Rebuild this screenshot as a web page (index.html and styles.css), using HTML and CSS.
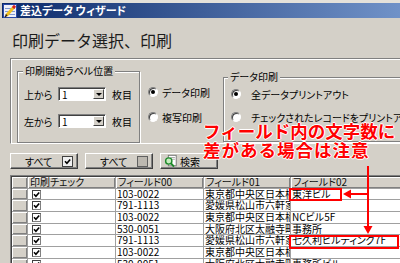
FILE: index.html
```html
<!DOCTYPE html>
<html lang="ja">
<head>
  <meta charset="UTF-8" />
  <title>差込データ ウィザード</title>
  <link rel="stylesheet" href="styles.css">
</head>
<body>
  <div class="window">
    <div class="frame-top"></div>
    <div class="titlebar">
      <svg class="app-icon" viewBox="0 0 14 14">
        <rect x="0.5" y="0.5" width="13" height="13" fill="#eef0f8" stroke="#2848a8"/>
        <path d="M2 4.5h10M2 7.5h10M2 10.5h10" stroke="#8098d0"/>
        <path d="M3.5 11.5 L10.5 3.5" stroke="#f0c020" stroke-width="3"/>
        <path d="M10 4 L12 1.8" stroke="#d82020" stroke-width="3"/>
        <path d="M2 13 L4 10.8" stroke="#302010" stroke-width="1.6"/>
      </svg>
      <span>差込データ ウィザード</span>
    </div>

    <h1 class="heading">印刷データ選択、印刷</h1>

    <div class="options">
      <fieldset class="group group-start">
        <legend>印刷開始ラベル位置</legend>
        <div class="pos-row">
          <span class="pos-label">上から</span>
          <span class="combo"><span class="combo-value">1</span><span class="combo-btn"></span></span>
          <span class="pos-unit">枚目</span>
        </div>
        <div class="pos-row">
          <span class="pos-label">左から</span>
          <span class="combo"><span class="combo-value">1</span><span class="combo-btn"></span></span>
          <span class="pos-unit">枚目</span>
        </div>
      </fieldset>

      <div class="radio-col">
        <div class="radio"><span class="radio-icon checked"></span>データ印刷</div>
        <div class="radio"><span class="radio-icon"></span>複写印刷</div>
      </div>

      <fieldset class="group group-data">
        <legend>データ印刷</legend>
        <div class="radio wide"><span class="radio-icon checked"></span>全データプリントアウト</div>
        <div class="radio wide"><span class="radio-icon"></span>チェックされたレコードをプリントアウト</div>
      </fieldset>
    </div>

    <div class="toolbar">
      <div class="btn btn-all">すべて <span class="btn-box"><svg viewBox="0 0 7 7"><path d="M1 3.2 L2.9 5.2 L6.2 1.4" fill="none" stroke="#000" stroke-width="1.6"/></svg></span></div>
      <div class="btn btn-all">すべて <span class="btn-box empty"></span></div>
      <div class="btn btn-search">
        <svg class="search-icon" viewBox="0 0 16 16">
          <rect x="5.5" y="1.5" width="9" height="12" fill="#fff" stroke="#707070"/>
          <path d="M8 4h5M8 6h5" stroke="#a0a0a0"/>
          <circle cx="6" cy="8" r="3.6" fill="#c8ecc0" stroke="#1e8a2a" stroke-width="1.6"/>
          <path d="M8.6 10.8 L12 14.5" stroke="#1e8a2a" stroke-width="2.2"/>
        </svg>
        検索
      </div>
    </div>

    <div class="grid">
      <div class="hcell"></div>
      <div class="hcell">印刷チェック</div>
      <div class="hcell">フィールド00</div>
      <div class="hcell">フィールド01</div>
      <div class="hcell">フィールド02</div>

      <div class="hcell"></div>
      <div class="cell"><span class="cb"><svg viewBox="0 0 7 7"><path d="M1 3.2 L2.9 5.2 L6.2 1.4" fill="none" stroke="#000" stroke-width="1.6"/></svg></span></div>
      <div class="cell">103-0022</div>
      <div class="cell">東京都中央区日本橋</div>
      <div class="cell">東洋ビル</div>

      <div class="hcell"></div>
      <div class="cell"><span class="cb"><svg viewBox="0 0 7 7"><path d="M1 3.2 L2.9 5.2 L6.2 1.4" fill="none" stroke="#000" stroke-width="1.6"/></svg></span></div>
      <div class="cell">791-1113</div>
      <div class="cell">愛媛県松山市六軒家町</div>
      <div class="cell"></div>

      <div class="hcell"></div>
      <div class="cell"><span class="cb"><svg viewBox="0 0 7 7"><path d="M1 3.2 L2.9 5.2 L6.2 1.4" fill="none" stroke="#000" stroke-width="1.6"/></svg></span></div>
      <div class="cell">103-0022</div>
      <div class="cell">東京都中央区日本橋</div>
      <div class="cell">NCビル5F</div>

      <div class="hcell"></div>
      <div class="cell"><span class="cb"><svg viewBox="0 0 7 7"><path d="M1 3.2 L2.9 5.2 L6.2 1.4" fill="none" stroke="#000" stroke-width="1.6"/></svg></span></div>
      <div class="cell">530-0051</div>
      <div class="cell">大阪府北区太融寺町</div>
      <div class="cell">事務所</div>

      <div class="hcell"></div>
      <div class="cell"><span class="cb"><svg viewBox="0 0 7 7"><path d="M1 3.2 L2.9 5.2 L6.2 1.4" fill="none" stroke="#000" stroke-width="1.6"/></svg></span></div>
      <div class="cell">791-1113</div>
      <div class="cell">愛媛県松山市六軒家町</div>
      <div class="cell">七久利ビルディング7F</div>

      <div class="hcell"></div>
      <div class="cell"><span class="cb"><svg viewBox="0 0 7 7"><path d="M1 3.2 L2.9 5.2 L6.2 1.4" fill="none" stroke="#000" stroke-width="1.6"/></svg></span></div>
      <div class="cell">103-0022</div>
      <div class="cell">東京都中央区日本橋</div>
      <div class="cell"></div>

      <div class="hcell"></div>
      <div class="cell"><span class="cb"><svg viewBox="0 0 7 7"><path d="M1 3.2 L2.9 5.2 L6.2 1.4" fill="none" stroke="#000" stroke-width="1.6"/></svg></span></div>
      <div class="cell">530-0051</div>
      <div class="cell">大阪府北区太融寺町</div>
      <div class="cell">事務所ビル</div>
    </div>

    <!-- annotation drawn over the dialog -->
    <div class="note">フィールド内の文字数に<br><span class="note-wide">差がある場合は注意</span></div>
    <svg class="marks" viewBox="0 0 400 263">
      <rect x="290" y="189" width="51" height="11" fill="none" stroke="#f00" stroke-width="2"/>
      <rect x="290" y="236" width="108" height="12" fill="none" stroke="#f00" stroke-width="2"/>
      <path d="M368 166 V227 M368 194 H350" fill="none" stroke="#f00" stroke-width="2"/>
      <polygon points="363.5,226 372.5,226 368,234" fill="#f00"/>
      <polygon points="351,189.5 351,198.5 343,194" fill="#f00"/>
    </svg>
  </div>
</body>
</html>
```

FILE: styles.css
```css
    body {
      margin: 0;
      font-family: "Noto Sans CJK JP", "DejaVu Sans", sans-serif;
      font-size: 10px;
      font-feature-settings: "palt";
      color: #000;
    }

    .window {
      position: relative;
      width: 400px;
      height: 263px;
      overflow: hidden;
      background-color: #d4d0c8;
    }

    .frame-top {
      height: 3px;
      background: #e4e1da;
    }

    .titlebar {
      display: flex;
      align-items: center;
      gap: 3px;
      height: 15px;
      margin-left: 2px;
      padding-left: 1px;
      background: linear-gradient(to right, #0c2a6a, #7092c8);
      color: #fff;
      font-size: 11px;
      font-weight: bold;
      line-height: 15px;
      white-space: nowrap;
    }

    .app-icon {
      width: 14px;
      height: 14px;
      flex: none;
    }

    .heading {
      margin: 14px 0 0 12px;
      font-size: 16px;
      line-height: 16px;
      font-weight: normal;
      font-feature-settings: normal;
      color: #1c1c1c;
    }

    .options {
      display: flex;
      align-items: flex-start;
      width: 420px;
      height: 84px;
      margin: 10px 0 0 10px;
      padding-left: 6px;
      border-top: 1px solid #808080;
      border-left: 1px solid #808080;
      border-bottom: 1px solid #fff;
      box-shadow: inset 1px 1px 0 #fff;
    }

    .group {
      box-sizing: border-box;
      margin: 0;
      min-width: 0;
      border: 1px solid #808080;
      box-shadow: 1px 1px 0 #fff, inset 1px 1px 0 #fff;
    }

    .group legend {
      padding: 0 2px;
      font-size: 10px;
      line-height: 12px;
      background: #d4d0c8;
      white-space: nowrap;
    }

    .group-start {
      width: 123px;
      height: 78px;
      margin-top: 6px;
      padding: 10px 4px 0 5px;
    }

    .pos-row {
      display: flex;
      align-items: center;
      height: 14px;
      margin-bottom: 13px;
    }

    .pos-label {
      width: 34px;
      padding-left: 1px;
    }

    .combo {
      box-sizing: border-box;
      display: flex;
      justify-content: space-between;
      width: 48px;
      height: 14px;
      border: 1px solid;
      border-color: #808080 #fff #fff #808080;
      box-shadow: inset 1px 1px 0 #404040;
      background: #fff;
    }

    .combo-value {
      padding: 1px 0 0 3px;
      line-height: 11px;
    }

    .combo-btn {
      box-sizing: border-box;
      position: relative;
      width: 11px;
      height: 10px;
      margin: 1px 1px 0 0;
      border: 1px solid;
      border-color: #fff #404040 #404040 #fff;
      background: #d4d0c8;
    }

    .combo-btn::after {
      content: "";
      position: absolute;
      left: 1.5px;
      top: 2.5px;
      border-left: 3px solid transparent;
      border-right: 3px solid transparent;
      border-top: 3px solid #000;
    }

    .pos-unit {
      margin-left: 6px;
    }

    .radio-col {
      flex: none;
      width: 75px;
      margin: 27px 0 0 8px;
    }

    .radio {
      display: flex;
      align-items: center;
      gap: 4px;
      height: 12px;
      margin-bottom: 13px;
      white-space: nowrap;
    }

    .radio-icon {
      box-sizing: border-box;
      display: grid;
      place-items: center;
      flex: none;
      width: 10px;
      height: 10px;
      border-radius: 50%;
      border: 1px solid;
      border-color: #808080 #fff #fff #808080;
      box-shadow: inset 1px 1px 0 #404040;
      background: #fff;
    }

    .radio-icon.checked::after {
      content: "";
      width: 4px;
      height: 4px;
      border-radius: 50%;
      background: #000;
    }

    .group-data {
      flex: 1;
      height: 71px;
      margin-top: 12px;
      padding: 5px 0 0 4px;
    }

    .radio.wide {
      gap: 10px;
      margin: 0 0 11px 3px;
    }

    .toolbar {
      display: flex;
      gap: 7px;
      margin: 9px 0 0 10px;
    }

    .btn {
      box-sizing: border-box;
      display: flex;
      align-items: center;
      height: 16px;
      border: 1px solid;
      border-color: #fff #404040 #404040 #fff;
      box-shadow: inset -1px -1px 0 #808080;
      background: #d4d0c8;
      white-space: nowrap;
    }

    .btn-all {
      width: 68px;
      padding-left: 14px;
      gap: 10px;
    }

    .btn-box {
      box-sizing: border-box;
      display: grid;
      place-items: center;
      width: 11px;
      height: 11px;
      border: 1px solid #404040;
      background: #f0f0f0;
    }

    .btn-box svg {
      width: 7px;
      height: 7px;
    }

    .btn-box.empty {
      border-color: #606060;
      background: #bcb8b0;
    }

    .btn-search {
      width: 58px;
      padding-left: 2px;
      gap: 2px;
    }

    .search-icon {
      width: 15px;
      height: 14px;
    }

    .grid {
      display: grid;
      grid-template-columns: 15px 87px 87px 86px 140px;
      grid-auto-rows: 10.67px;
      gap: 1px;
      margin: 6px 0 0 10px;
      padding: 1px 0 0 1px;
      border-top: 1px solid #808080;
      border-left: 1px solid #808080;
      box-shadow: inset 1px 1px 0 #404040;
      background: #a0a0a0;
    }

    .hcell,
    .cell {
      padding-left: 2px;
      line-height: 10.67px;
      white-space: nowrap;
      overflow: hidden;
    }

    .hcell {
      background: #d4d0c8;
      box-shadow: inset 1px 1px 0 #fff, inset -1px -1px 0 #808080;
      color: #101010;
    }

    .cell {
      background: #fff;
      padding-left: 1px;
    }

    .cb {
      box-sizing: border-box;
      display: grid;
      place-items: center;
      width: 9px;
      height: 9px;
      margin: 1px 0 0 3px;
      border: 1px solid;
      border-color: #404040 #808080 #808080 #404040;
      background: #fff;
    }

    .cb svg {
      width: 7px;
      height: 7px;
    }

    .note {
      position: absolute;
      left: 203px;
      top: 121px;
      color: #f00;
      font-size: 17.5px;
      font-weight: bold;
      font-feature-settings: normal;
      line-height: 19px;
      white-space: nowrap;
      text-shadow: 1px 0 0 #fff, -1px 0 0 #fff, 0 1px 0 #fff, 0 -1px 0 #fff;
    }

    .note-wide {
      letter-spacing: 1px;
    }

    .marks {
      position: absolute;
      left: 0;
      top: 0;
      width: 400px;
      height: 263px;
      pointer-events: none;
    }
```
